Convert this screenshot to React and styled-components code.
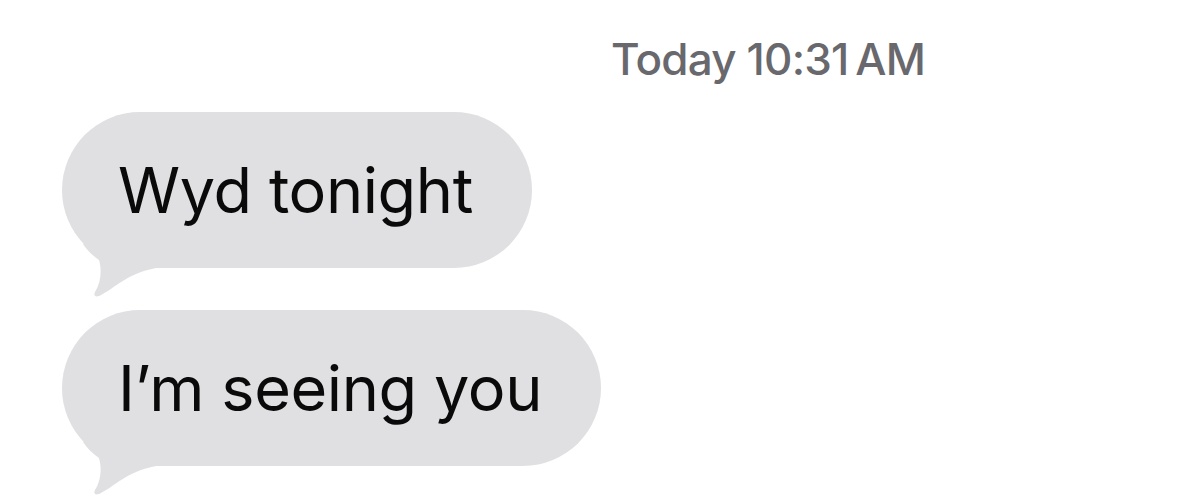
import React from "react";
import styled, { createGlobalStyle } from "styled-components";

const Global = createGlobalStyle`
  html, body {
    margin: 0;
    padding: 0;
    background: #ffffff;
  }
  body {
    font-family: Inter, "Liberation Sans", sans-serif;
    -webkit-font-smoothing: antialiased;
  }
`;

const BUBBLE = "#e0e0e3";

export default function App() {
  return (
    <>
      <Global />
      <Thread>
        <Stamp>Today 10:31&#8201;AM</Stamp>
        <Bubble>
          Wyd tonight
          <Tail />
        </Bubble>
        <Bubble>
          I’m seeing you
          <Tail />
        </Bubble>
      </Thread>
    </>
  );
}

// tail hanging off the bottom-left of a received bubble
function Tail() {
  return (
    <TailSvg width="100" height="64" viewBox="0 0 100 64">
      <path
        d="M 21 6 C 25 12, 30 17, 37 22 C 40 32, 39 45, 33 54 C 31 58, 34 60, 39 57 C 53 50, 64 36, 94 30 L 94 6 Z"
        fill={BUBBLE}
      />
    </TailSvg>
  );
}

const Thread = styled.div`
  width: 1200px;
  height: 498px;
  box-sizing: border-box;
  padding: 36px 0 0 62px;
  display: flex;
  flex-direction: column;
  align-items: flex-start;
  gap: 42px;
  overflow: hidden;
`;

const Stamp = styled.div`
  margin-left: 549px;
  margin-bottom: -12px;
  font-size: 44px;
  font-weight: 500;
  color: #68686d;
  letter-spacing: -0.8px;
  line-height: 46px;
`;

const Bubble = styled.div`
  position: relative;
  height: 156px;
  box-sizing: border-box;
  padding: 0 59px 0 56px;
  display: flex;
  align-items: center;
  background: ${BUBBLE};
  border-radius: 78px;
  font-size: 63px;
  color: #0a0a0a;
  letter-spacing: -0.4px;
  white-space: nowrap;
`;

const TailSvg = styled.svg`
  position: absolute;
  left: 0;
  bottom: -34px;
`;
